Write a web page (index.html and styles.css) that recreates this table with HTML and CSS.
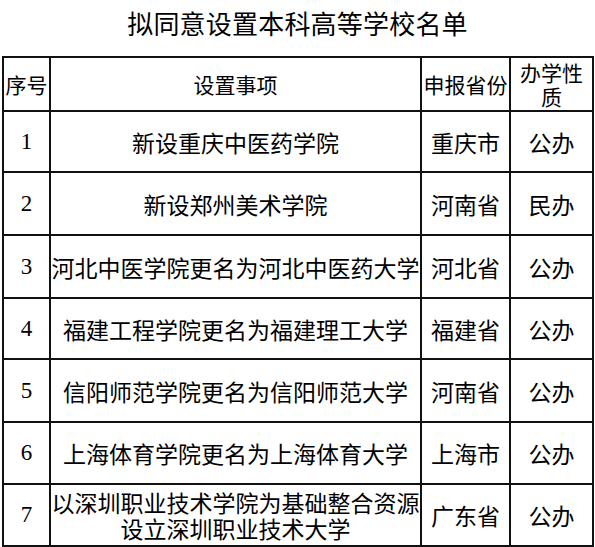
FILE: index.html
```html
<!DOCTYPE html>
<html lang="zh-CN">
<head>
<meta charset="utf-8">
<link rel="stylesheet" href="styles.css">
</head>
<body>
<h1 class="title">拟同意设置本科高等学校名单</h1>
<table class="list">
  <colgroup>
    <col class="c-no">
    <col class="c-item">
    <col class="c-prov">
    <col class="c-type">
  </colgroup>
  <thead>
    <tr class="r-head">
      <th>序号</th>
      <th>设置事项</th>
      <th>申报省份</th>
      <th class="wrap">办学性质</th>
    </tr>
  </thead>
  <tbody>
    <tr class="r-a"><td class="num">1</td><td>新设重庆中医药学院</td><td>重庆市</td><td>公办</td></tr>
    <tr class="r-b"><td class="num">2</td><td>新设郑州美术学院</td><td>河南省</td><td>民办</td></tr>
    <tr class="r-b"><td class="num">3</td><td>河北中医学院更名为河北中医药大学</td><td>河北省</td><td>公办</td></tr>
    <tr class="r-a"><td class="num">4</td><td>福建工程学院更名为福建理工大学</td><td>福建省</td><td>公办</td></tr>
    <tr class="r-b"><td class="num">5</td><td>信阳师范学院更名为信阳师范大学</td><td>河南省</td><td>公办</td></tr>
    <tr class="r-c"><td class="num">6</td><td>上海体育学院更名为上海体育大学</td><td>上海市</td><td>公办</td></tr>
    <tr class="r-c"><td class="num">7</td><td class="two"><span class="ln">以深圳职业技术学院为基础整合资源</span><span class="ln">设立深圳职业技术大学</span></td><td>广东省</td><td>公办</td></tr>
  </tbody>
</table>
</body>
</html>
```

FILE: styles.css
```css
html, body {
  margin: 0;
  padding: 0;
  background: #fff;
}
body {
  font-family: "Noto Sans CJK SC", "Noto Sans", sans-serif;
  color: #000;
  width: 595px;
}
.title {
  margin: 0;
  height: 56px;
  padding-top: 7px;
  box-sizing: border-box;
  font-size: 26px;
  line-height: 32px;
  font-weight: 400;
  text-align: center;
  letter-spacing: 0.2px;
}
.list {
  border-collapse: collapse;
  table-layout: fixed;
  margin-left: 2px;
  width: 590px;
}
.c-no { width: 47px; }
.c-item { width: 371px; }
.c-prov { width: 89px; }
.c-type { width: 83px; }
.list th, .list td {
  border: 2px solid #111;
  padding: 0;
  text-align: center;
  vertical-align: middle;
  font-weight: 400;
  white-space: nowrap;
  overflow: visible;
}
.list th {
  font-size: 21px;
  line-height: 24px;
}
.list th.wrap {
  white-space: normal;
  padding: 0 3px;
  line-height: 24px;
}
.list td {
  font-size: 23px;
  line-height: 26px;
}
.list td.num {
  font-family: "Liberation Serif", serif;
  font-size: 23px;
}
.list td.two .ln {
  display: block;
  line-height: 26px;
}
.r-head { height: 54px; }
.r-a { height: 61px; }
.r-b { height: 63px; }
.r-c { height: 62px; }
```
